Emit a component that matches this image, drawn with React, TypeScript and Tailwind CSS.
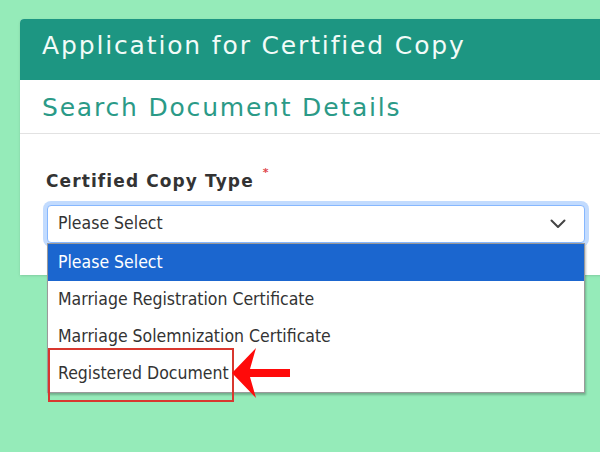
const options = [
  'Please Select',
  'Marriage Registration Certificate',
  'Marriage Solemnization Certificate',
  'Registered Document',
];

export default function App() {
  return (
    <div className="w-[600px] h-[452px] overflow-hidden bg-[#95ebb9] pt-[19px] pl-[20px]">
      {/* Card */}
      <div className="w-[620px] h-[256px] bg-white rounded-t-[4px] shadow-sm">
        <div
          className="h-[61px] bg-[#1d9682] rounded-t-[4px] pl-[22px] pb-[8px] flex items-center text-[25px] tracking-[1.85px] text-[#f2fbf8]"
          style={{ fontFamily: '"DejaVu Sans", Verdana, sans-serif' }}
        >
          Application for Certified Copy
        </div>
        <div
          className="h-[54px] border-b border-[#e2e2e2] pl-[22px] pt-[3px] flex items-center text-[25px] tracking-[1.8px] text-[#2b9a87]"
          style={{ fontFamily: '"DejaVu Sans", Verdana, sans-serif' }}
        >
          Search Document Details
        </div>

        <div className="pl-[26px] pt-[35px]">
          <div
            className="flex items-start text-[17px] font-bold tracking-[1.1px] text-[#333333]"
            style={{ fontFamily: '"DejaVu Sans", Verdana, sans-serif' }}
          >
            Certified Copy Type
            <span className="ml-[9px] -mt-[4px] text-[11px] text-[#e0474c]">*</span>
          </div>

          {/* Select with open list */}
          <div className="relative mt-[10px] ml-px w-[538px]">
            <div
              className="h-[38px] rounded-[4px] border border-[#86b7fe] bg-white shadow-[0_0_0_4px_#c2dbfe] flex items-center justify-between pl-[10px] pr-[18px] text-[17.5px] text-[#333333]"
              style={{ fontFamily: '"DejaVu Sans Condensed", "DejaVu Sans", sans-serif' }}
            >
              <span>Please Select</span>
              <svg width="16" height="10" viewBox="0 0 16 10">
                <polyline
                  points="1.5,1.5 8,8 14.5,1.5"
                  fill="none"
                  stroke="#444444"
                  strokeWidth="2"
                  strokeLinecap="round"
                  strokeLinejoin="round"
                />
              </svg>
            </div>

            <div
              className="absolute left-0 top-[38px] w-[538px] bg-white border border-[#9a9a9a] shadow-[1px_2px_2px_rgba(0,0,0,0.25)] text-[17.5px]"
              style={{ fontFamily: '"DejaVu Sans Condensed", "DejaVu Sans", sans-serif' }}
            >
              {options.map((o, i) => (
                <div
                  key={o}
                  className={
                    i === 0
                      ? 'h-[37px] flex items-center pl-[10px] bg-[#1b66cf] text-white'
                      : 'h-[37px] flex items-center pl-[10px] text-[#333333]'
                  }
                >
                  {o}
                </div>
              ))}
            </div>

            {/* Annotation: red box + arrow */}
            <div className="absolute left-[1px] top-[143px] w-[186px] h-[54px] border-2 border-[#d8372f]" />
            <svg
              className="absolute left-[184px] top-[140px]"
              width="62"
              height="56"
              viewBox="0 0 62 56"
            >
              <polygon
                points="1,28 25,3 19,24 59,24 59,32 19,32 25,53"
                fill="#ff0a0a"
              />
            </svg>
          </div>
        </div>
      </div>
    </div>
  );
}
